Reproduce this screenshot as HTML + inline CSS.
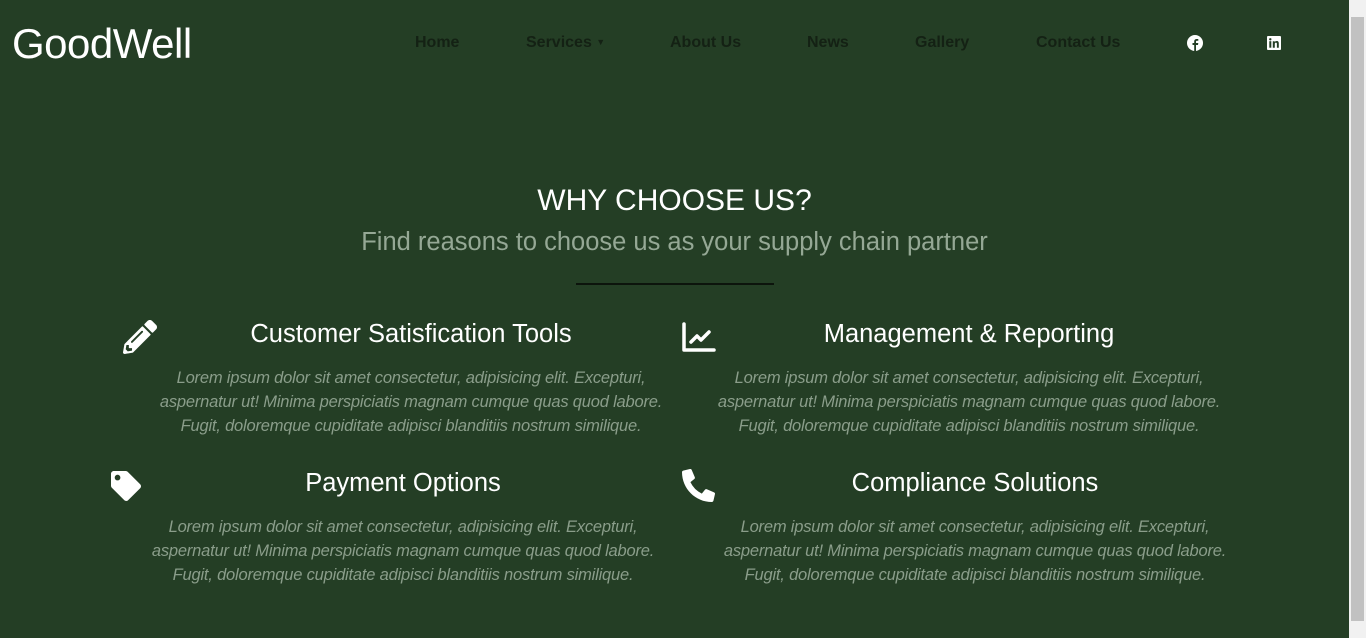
<!DOCTYPE html>
<html><head><meta charset="utf-8"><style>
*{margin:0;padding:0;box-sizing:border-box}
html,body{width:1366px;height:638px;overflow:hidden;background:#243e25;font-family:"Liberation Sans",sans-serif}
.logo{position:absolute;left:12px;top:20px;color:#fff;font-size:42px;letter-spacing:-0.5px}
.nav a{position:absolute;top:34px;color:#142114;font-size:16px;font-weight:bold;text-decoration:none;white-space:nowrap}
.sb{position:absolute;left:1349px;top:0;width:17px;height:638px;background:#f1f1f1}
.sb div{position:absolute;left:2px;top:17px;width:13px;height:604px;background:#c1c1c1}
.h1{position:absolute;left:0;width:1349px;top:184px;text-align:center;color:#fff;font-size:30px}
.h2{position:absolute;left:0;width:1349px;top:228px;text-align:center;color:#95a895;font-size:25.5px}
.line{position:absolute;left:576px;top:283px;width:198px;height:2px;background:#0c140c}
.t{position:absolute;color:#fff;font-size:25.5px;text-align:center;white-space:nowrap}
.p{position:absolute;color:#8a9d8a;font-size:16.5px;font-style:italic;line-height:24px;text-align:center;width:520px;letter-spacing:-0.2px;white-space:nowrap}
svg{position:absolute;fill:#fff}
</style></head><body>
<div class="logo">GoodWell</div>
<div class="nav">
<a style="left:415px">Home</a>
<a style="left:526px">Services <span style="font-size:9px;vertical-align:2px">▼</span></a>
<a style="left:670px">About Us</a>
<a style="left:807px">News</a>
<a style="left:915px">Gallery</a>
<a style="left:1036px">Contact Us</a>
</div>
<svg style="left:1187px;top:35px" width="16" height="16" viewBox="0 0 16 16"><circle cx="8" cy="8" r="8"/><path d="M9 16V10h2l.3-2H9V6.8c0-.6.2-1 1-1h1.3V4.1C11 4 10.4 4 9.8 4 8.3 4 7.2 4.9 7.2 6.5V8H5.5v2h1.7v6z" fill="#243e25"/></svg>
<svg style="left:1267px;top:36px" width="14" height="14" viewBox="0 0 14 14"><rect width="14" height="14" rx="1"/><rect x="2.3" y="5.2" width="2" height="6.5" fill="#243e25"/><circle cx="3.3" cy="3.3" r="1.2" fill="#243e25"/><path d="M5.8 5.2h1.9v.9c.4-.7 1.2-1.1 2-1.1 1.6 0 2.1 1 2.1 2.5v4.2H9.9V8c0-.8-.2-1.4-1-1.4S7.8 7.2 7.8 8v3.7h-2z" fill="#243e25"/></svg>
<div class="h1">WHY CHOOSE US?</div>
<div class="h2">Find reasons to choose us as your supply chain partner</div>
<div class="line"></div>

<svg style="left:123px;top:320px" width="34" height="34" viewBox="0 0 512 512"><path d="M497.9 142.1l-46.1 46.1c-4.7 4.7-12.3 4.7-17 0l-111-111c-4.7-4.7-4.7-12.3 0-17l46.1-46.1c18.7-18.7 49.1-18.7 67.9 0l60.1 60.1c18.8 18.7 18.8 49.1 0 67.9zM284.2 99.8L21.6 362.4.4 483.9c-2.9 16.4 11.4 30.6 27.8 27.8l121.5-21.3 262.6-262.6c4.7-4.7 4.7-12.3 0-17l-111-111c-4.8-4.7-12.4-4.7-17.1 0zM124.1 339.9c-5.5-5.5-5.5-14.3 0-19.8l154-154c5.5-5.5 14.3-5.5 19.8 0s5.5 14.3 0 19.8l-154 154c-5.5 5.5-14.3 5.5-19.8 0zM88 424h48v36.3l-64.5 11.3-31.1-31.1L51.7 376H88v48z"/></svg>
<div class="t" style="left:162px;width:498px;top:320px">Customer Satisfication Tools</div>
<div class="p" style="left:151px;top:366px">Lorem ipsum dolor sit amet consectetur, adipisicing elit. Excepturi,<br>aspernatur ut! Minima perspiciatis magnam cumque quas quod labore.<br>Fugit, doloremque cupiditate adipisci blanditiis nostrum similique.</div>

<svg style="left:682px;top:322px" width="34" height="30" viewBox="0 0 34 30"><path style="fill:none;stroke:#fff;stroke-width:3.5;stroke-linecap:round;stroke-linejoin:round" d="M2 2v26h30"/><path style="fill:none;stroke:#fff;stroke-width:3.5;stroke-linecap:round;stroke-linejoin:round" d="M9 20l6-6 4 4 8-8"/></svg>
<div class="t" style="left:720px;width:498px;top:320px">Management &amp; Reporting</div>
<div class="p" style="left:709px;top:366px">Lorem ipsum dolor sit amet consectetur, adipisicing elit. Excepturi,<br>aspernatur ut! Minima perspiciatis magnam cumque quas quod labore.<br>Fugit, doloremque cupiditate adipisci blanditiis nostrum similique.</div>

<svg style="left:111px;top:471px" width="30" height="30" viewBox="0 0 512 512"><path d="M0 252.1V48C0 21.5 21.5 0 48 0h204.1a48 48 0 0 1 33.9 14.1l211.9 211.9c18.7 18.7 18.7 49.1 0 67.9L293.8 497.9c-18.7 18.7-49.1 18.7-67.9 0L14.1 286.1A48 48 0 0 1 0 252.1zM112 64c-26.5 0-48 21.5-48 48s21.5 48 48 48 48-21.5 48-48-21.5-48-48-48z"/></svg>
<div class="t" style="left:154px;width:498px;top:469px">Payment Options</div>
<div class="p" style="left:143px;top:515px">Lorem ipsum dolor sit amet consectetur, adipisicing elit. Excepturi,<br>aspernatur ut! Minima perspiciatis magnam cumque quas quod labore.<br>Fugit, doloremque cupiditate adipisci blanditiis nostrum similique.</div>

<svg style="left:682px;top:469px" width="33" height="33" viewBox="0 0 512 512"><path d="M497.4 361.8l-112-48a24 24 0 0 0-28 6.9l-49.6 60.6A370.7 370.7 0 0 1 130.6 204.1l60.6-49.6a23.9 23.9 0 0 0 6.9-28l-48-112A24.2 24.2 0 0 0 122.6.6l-104 24A24 24 0 0 0 0 48c0 256.5 207.9 464 464 464a24 24 0 0 0 23.4-18.6l24-104a24.3 24.3 0 0 0-14-27.6z"/></svg>
<div class="t" style="left:726px;width:498px;top:469px">Compliance Solutions</div>
<div class="p" style="left:715px;top:515px">Lorem ipsum dolor sit amet consectetur, adipisicing elit. Excepturi,<br>aspernatur ut! Minima perspiciatis magnam cumque quas quod labore.<br>Fugit, doloremque cupiditate adipisci blanditiis nostrum similique.</div>

<div class="sb"><div></div></div>
</body></html>
